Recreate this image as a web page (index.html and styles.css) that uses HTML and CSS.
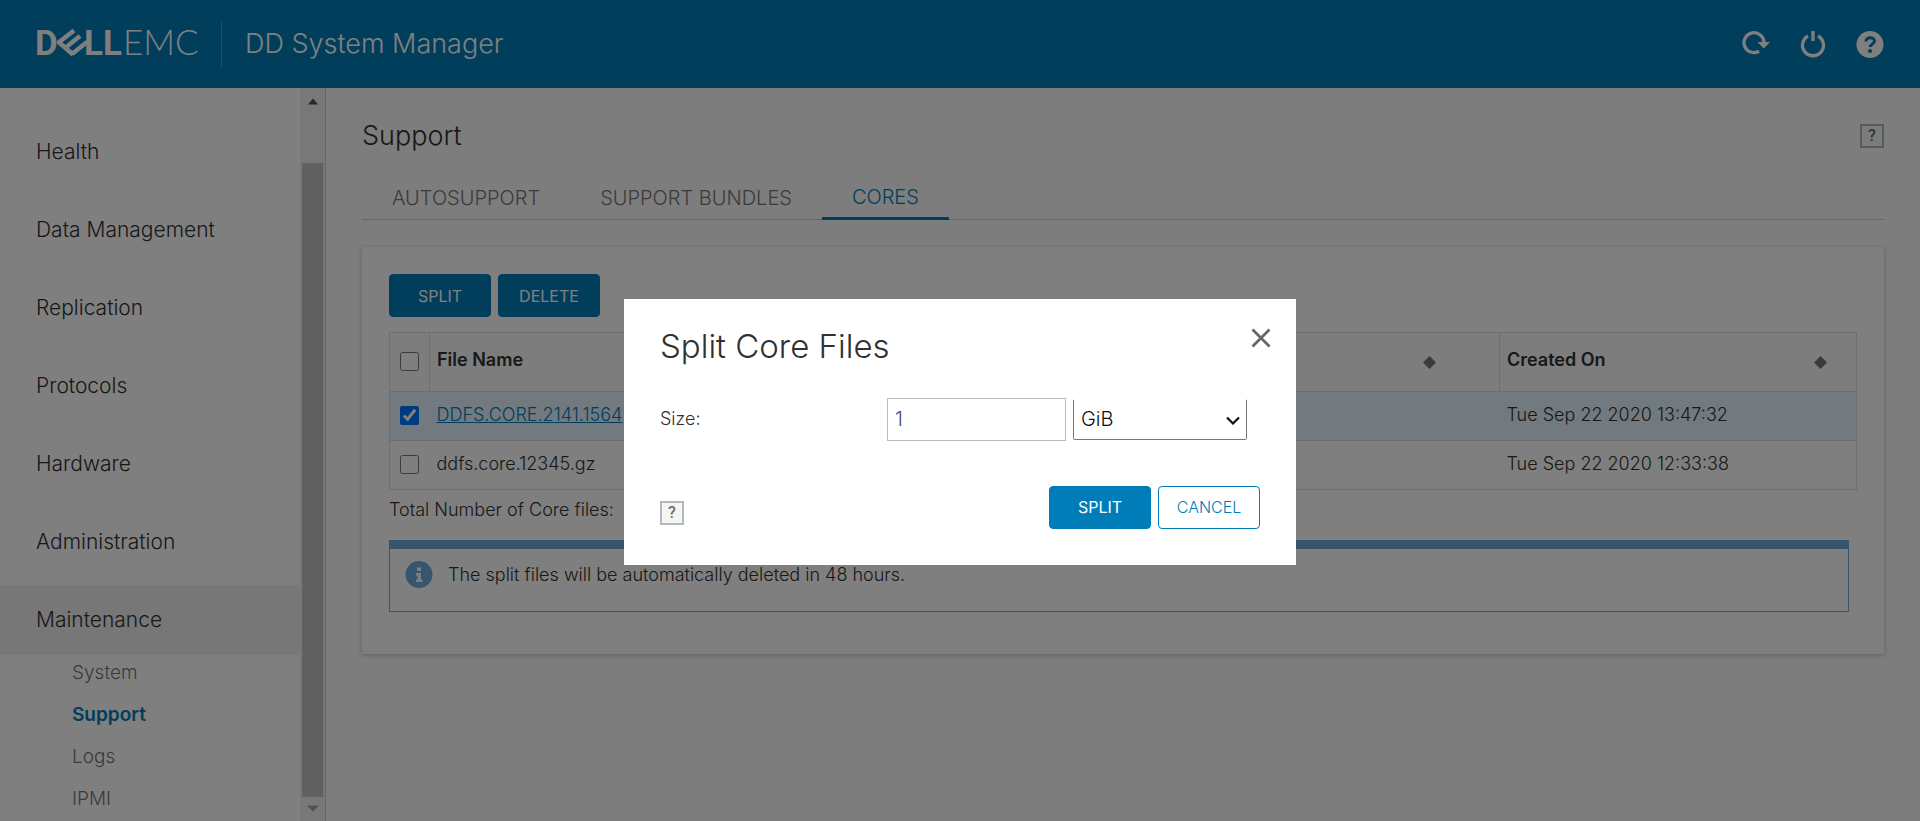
FILE: index.html
```html
<!DOCTYPE html>
<html lang="en">
<head>
<meta charset="utf-8">
<title>DD System Manager</title>
<link rel="stylesheet" href="styles.css">
</head>
<body>
<div class="app">
  <header class="header">
    <svg class="logo" width="168" height="50" viewBox="0 0 168 50" role="img" aria-label="Dell EMC">
      <g fill="#fff">
        <text x="-1" y="36" class="logo-bold">D</text>
        <text x="48" y="36" class="logo-bold">LL</text>
        <text x="87" y="36" class="logo-light">EMC</text>
      </g>
      <path d="M22 24 38 11.500M29 29 44 17M36 35 51 23M22 22.500 37 35.500" fill="none" stroke="#fff" stroke-width="4.500"/>
    </svg>
    <span class="header-divider"></span>
    <span class="product">DD System Manager</span>
    <nav class="header-actions" aria-label="System actions">
      <button class="icon-button" type="button" aria-label="Refresh">
        <svg width="28" height="28" viewBox="0 0 28 28"><path d="M17 21.300A10 10 0 1 1 22 12.500" fill="none" stroke="#fff" stroke-width="3.300"/><path d="M15.500 12H28l-6.300 6.500z" fill="#fff"/></svg>
      </button>
      <button class="icon-button" type="button" aria-label="Power">
        <svg width="28" height="28" viewBox="0 0 28 28"><path d="M9 6A10.500 10.500 0 1 0 19 6" fill="none" stroke="#fff" stroke-width="3.300"/><path d="M14 1v10" stroke="#fff" stroke-width="3.300"/></svg>
      </button>
      <button class="icon-button" type="button" aria-label="Help">
        <svg width="28" height="28" viewBox="0 0 28 28"><circle cx="14" cy="14.500" r="13.500" fill="#fff"/><path d="M10 11.500c0-5 8.500-5 8.500-.5 0 3-4.300 2.800-4.300 6" fill="none" stroke="#007db8" stroke-width="3"/><circle cx="14" cy="21" r="2" fill="#007db8"/></svg>
      </button>
    </nav>
  </header>

  <div class="body">
    <aside class="sidebar">
      <nav class="menu" aria-label="Main">
        <a class="menu-item" href="#">Health</a>
        <a class="menu-item" href="#">Data Management</a>
        <a class="menu-item" href="#">Replication</a>
        <a class="menu-item" href="#">Protocols</a>
        <a class="menu-item" href="#">Hardware</a>
        <a class="menu-item" href="#">Administration</a>
        <a class="menu-item menu-item-active" href="#">Maintenance</a>
        <div class="submenu">
          <a class="submenu-item" href="#">System</a>
          <a class="submenu-item submenu-item-active" href="#">Support</a>
          <a class="submenu-item" href="#">Logs</a>
          <a class="submenu-item" href="#">IPMI</a>
        </div>
      </nav>
      <div class="scrollbar" aria-hidden="true">
        <svg width="12" height="7" viewBox="0 0 12 7"><path d="M1 6.500 6 .5l5 6z" fill="#505050"/></svg>
        <span class="scrollbar-thumb"></span>
        <svg width="12" height="7" viewBox="0 0 12 7"><path d="M0 .5h12l-6 6z" fill="#a3a3a3"/></svg>
      </div>
    </aside>

    <main class="content">
      <div class="page-head">
        <h1 class="page-title">Support</h1>
        <button class="help-box" type="button">?</button>
      </div>
      <nav class="tabs" aria-label="Support sections">
        <a class="tab" href="#">AUTOSUPPORT</a>
        <a class="tab" href="#">SUPPORT BUNDLES</a>
        <a class="tab tab-active" href="#">CORES</a>
      </nav>
      <section class="card">
        <div class="toolbar">
          <button class="button button-primary" type="button">SPLIT</button>
          <button class="button button-primary" type="button">DELETE</button>
        </div>
        <table class="files">
          <thead>
            <tr>
              <th class="col-check"><input class="check" type="checkbox" aria-label="Select all"></th>
              <th class="col-name"><div class="th-inner"><span class="th-label">File Name</span>
                <svg class="sort" width="13" height="13" viewBox="0 0 13 13"><path d="M6.500 0 13 6.500 6.500 13 0 6.500z" fill="#777"/></svg></div></th>
              <th class="col-date"><div class="th-inner"><span class="th-label">Created On</span>
                <svg class="sort" width="13" height="13" viewBox="0 0 13 13"><path d="M6.500 0 13 6.500 6.500 13 0 6.500z" fill="#777"/></svg></div></th>
            </tr>
          </thead>
          <tbody>
            <tr class="row-selected">
              <td class="col-check"><input class="check" type="checkbox" checked aria-label="Select DDFS.CORE.2141.1564"></td>
              <td><a class="file-link" href="#">DDFS.CORE.2141.1564</a></td>
              <td>Tue Sep 22 2020 13:47:32</td>
            </tr>
            <tr>
              <td class="col-check"><input class="check" type="checkbox" aria-label="Select ddfs.core.12345.gz"></td>
              <td>ddfs.core.12345.gz</td>
              <td>Tue Sep 22 2020 12:33:38</td>
            </tr>
          </tbody>
        </table>
        <p class="total">Total Number of Core files:</p>
        <div class="notice">
          <svg width="28" height="28" viewBox="0 0 28 28"><circle cx="14" cy="13.500" r="13.500" fill="#6eaddb"/><path d="M12 6.500h4v3.500h-4zM11 12h5v6.500h1.500v2.500h-6.500v-2.500h1.500v-4H11z" fill="#fff"/></svg>
          <p class="notice-text">The split files will be automatically deleted in 48 hours.</p>
        </div>
      </section>
    </main>
  </div>
</div>

<div class="overlay">
  <form class="modal" role="dialog" aria-labelledby="modal-title">
    <div class="modal-head">
      <h2 class="modal-title" id="modal-title">Split Core Files</h2>
      <button class="close" type="button" aria-label="Close">
        <svg width="20" height="20" viewBox="0 0 20 20"><path d="M1.500 1.500l17 17M18.500 1.500l-17 17" stroke="#666" stroke-width="2.800"/></svg>
      </button>
    </div>
    <div class="field">
      <label class="field-label" for="size">Size:</label>
      <input class="field-input" id="size" type="text" value="1">
      <div class="select-wrap">
        <select class="field-select" aria-label="Unit"><option>GiB</option></select>
        <svg class="chevron" width="14" height="9" viewBox="0 0 14 9"><path d="M1 1.500l6 6 6-6" fill="none" stroke="#111" stroke-width="2.200"/></svg>
      </div>
    </div>
    <div class="modal-foot">
      <button class="help-box" type="button">?</button>
      <div class="modal-actions">
        <button class="button button-primary" type="submit">SPLIT</button>
        <button class="button button-outline" type="button">CANCEL</button>
      </div>
    </div>
  </form>
</div>
</body>
</html>
```
FILE: styles.css
```css
* { box-sizing: border-box; }
html, body { height: 100%; margin: 0; }
body {
  font-family: Inter, "Noto Sans", sans-serif;
  font-size: 18px;
  font-weight: 300;
  line-height: 24px;
  color: #313131;
  background: #fafafa;
  overflow: hidden;
}
a { color: inherit; text-decoration: none; }
button, input, select { font: inherit; color: inherit; margin: 0; }
svg { display: block; flex: none; }

.app { display: flex; flex-direction: column; height: 100%; }

.header {
  display: flex;
  align-items: center;
  flex: none;
  height: 88px;
  padding: 0 36px;
  background: #007db8;
  color: #fff;
}
.logo-bold { font: 700 35px Roboto, sans-serif; }
.logo-light { font: 300 35px Lato, sans-serif; }
.header-divider { width: 1px; height: 45px; margin: 0 23px 0 17px; background: #4aa3cc; }
.product { font-size: 27px; line-height: 36px; }
.header-actions { display: flex; gap: 29px; margin-left: auto; }
.icon-button { padding: 0; border: 0; background: none; }

.body { display: flex; flex: 1; min-height: 0; }

.sidebar { display: flex; flex: none; width: 326px; background: #fff; border-right: 1px solid #ccc; }
.menu { display: flex; flex-direction: column; flex: 1; gap: 8px; padding-top: 29px; overflow: hidden; }
.menu-item { flex: none; padding: 22px 36px; font-size: 21px; line-height: 26px; }
.menu-item-active { background: #eee; }
.submenu { display: flex; flex-direction: column; gap: 6px; margin-top: -8px; padding-left: 72px; }
.submenu-item { font-size: 19px; line-height: 36px; color: #777; }
.submenu-item-active { font-weight: 600; color: #007db8; }
.scrollbar {
  display: flex;
  flex-direction: column;
  align-items: center;
  width: 25px;
  padding: 10px 0 9px;
  background: #f1f1f1;
}
.scrollbar-thumb { flex: 1; width: 21px; margin: 58px 0 8px; background: #c1c1c1; }

.content { flex: 1; min-width: 0; padding: 30px 36px; }
.page-head { display: flex; align-items: center; justify-content: space-between; }
.page-title { margin: 0; font-size: 27px; font-weight: 300; line-height: 36px; }
.help-box {
  width: 24px;
  height: 24px;
  padding: 0;
  border: 2px solid #b5b8b9;
  background: #f4f6f6;
  font-family: Roboto, sans-serif;
  font-size: 16px;
  font-weight: 500;
  line-height: 20px;
  text-align: center;
  color: #6d6e70;
}
.tabs { display: flex; height: 54px; margin-top: 12px; border-bottom: 1px solid #ccc; }
.tab { height: 54px; padding: 20px 30px 0; font-size: 20px; color: #777; }
.tab-active { padding-top: 19px; color: #007db8; border-bottom: 3px solid #007db8; }
.card {
  margin-top: 27px;
  padding: 27px 27px 42px;
  background: #fff;
  box-shadow: 0 1px 4px rgba(0, 0, 0, .25);
}
.toolbar { display: flex; gap: 7px; }
.button {
  width: 102px;
  height: 43px;
  padding: 0;
  border: 1px solid #007db8;
  border-radius: 4px;
  font-size: 16px;
  text-align: center;
}
.button-primary { background: #007db8; color: #fff; font-weight: 400; }
.button-outline { background: #fff; color: #007db8; }

.files {
  width: 100%;
  margin-top: 15px;
  border: 1px solid #ddd;
  border-collapse: collapse;
  table-layout: fixed;
}
.files th, .files td { padding: 0 7px 3px; text-align: left; }
.files th { height: 59px; background: #fafafa; border: 1px solid #ddd; font-weight: 600; }
.files td { height: 49px; border-top: 1px solid #ddd; }
.files .col-check { width: 40px; padding: 0 0 3px; text-align: center; }
.files .col-name { width: auto; padding: 0 63px 0 7px; }
.files .col-date { width: 357px; padding: 0 29px 0 7px; }
.th-inner { display: flex; align-items: center; justify-content: space-between; }
.th-label { padding-bottom: 4px; }
.row-selected { background: #e4f2ff; }
.check { width: 19px; height: 19px; vertical-align: middle; }
.file-link { color: #007db8; text-decoration: underline; }
.total { margin: 8px 0 18px; }
.notice {
  display: flex;
  gap: 15px;
  height: 72px;
  margin-right: 8px;
  padding: 12px 15px;
  border: 1px solid #6eaddb;
  border-top-width: 9px;
}
.notice-text { margin: 2px 0; }

.overlay {
  position: fixed;
  inset: 0;
  display: flex;
  align-items: center;
  justify-content: center;
  padding-top: 42px;
  background: rgba(0, 0, 0, .5);
}
.modal { width: 672px; padding: 29px 36px 36px; background: #fff; }
.modal-head { display: flex; justify-content: space-between; }
.modal-title { margin: 0; font-size: 33px; font-weight: 300; line-height: 36px; }
.close { height: 20px; margin-right: -11px; padding: 0; border: 0; background: none; }
.field { display: flex; align-items: center; gap: 7px; margin-top: 34px; }
.field-label { width: 220px; }
.field-input { width: 179px; height: 43px; padding: 0 7px; border: 1px solid #bbb; font-size: 20px; color: #3d4f70; }
.select-wrap { position: relative; width: 174px; }
.field-select {
  width: 100%;
  height: 41px;
  padding: 0 7px;
  appearance: none;
  border: 1px solid #767676;
  border-top-color: transparent;
  border-radius: 2px;
  background: #fff;
  font-size: 20px;
  color: #111;
}
.chevron { position: absolute; right: 7px; top: 17px; pointer-events: none; }
.modal-foot { display: flex; align-items: flex-end; justify-content: space-between; margin-top: 45px; }
.modal-foot .help-box { margin-bottom: 4px; }
.modal-actions { display: flex; gap: 7px; }
```
